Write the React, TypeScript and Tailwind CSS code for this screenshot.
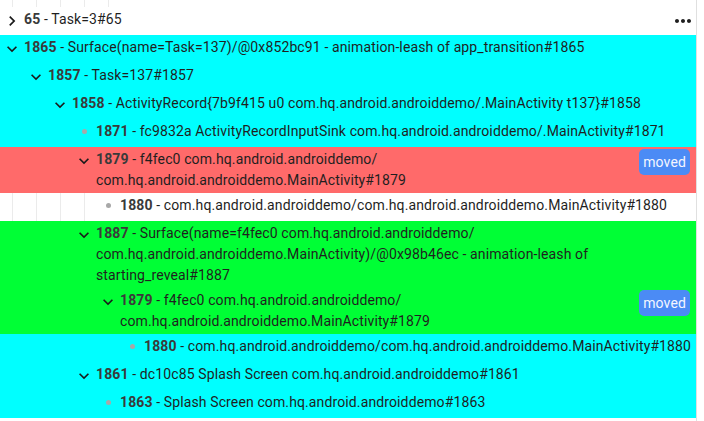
import React from "react";

type Row = {
  level: number;
  kind: "open" | "closed" | "leaf";
  id: string;
  text: string;
  bg: string;
  guides?: boolean;
  badge?: boolean;
  more?: boolean;
};

const rows: Row[] = [
  { level: 0, kind: "closed", id: "65", text: "Task=3#65", bg: "bg-white", more: true },
  { level: 0, kind: "open", id: "1865", text: "Surface(name=Task=137)/@0x852bc91 - animation-leash of app_transition#1865", bg: "bg-[#00ffff]" },
  { level: 1, kind: "open", id: "1857", text: "Task=137#1857", bg: "bg-[#00ffff]" },
  { level: 2, kind: "open", id: "1858", text: "ActivityRecord{7b9f415 u0 com.hq.android.androiddemo/.MainActivity t137}#1858", bg: "bg-[#00ffff]" },
  { level: 3, kind: "leaf", id: "1871", text: "fc9832a ActivityRecordInputSink com.hq.android.androiddemo/.MainActivity#1871", bg: "bg-[#00ffff]" },
  { level: 3, kind: "open", id: "1879", text: "f4fec0 com.hq.android.androiddemo/com.hq.android.androiddemo.MainActivity#1879", bg: "bg-[#ff6a6a]", badge: true },
  { level: 4, kind: "leaf", id: "1880", text: "com.hq.android.androiddemo/com.hq.android.androiddemo.MainActivity#1880", bg: "bg-white", guides: true },
  { level: 3, kind: "open", id: "1887", text: "Surface(name=f4fec0 com.hq.android.androiddemo/com.hq.android.androiddemo.MainActivity)/@0x98b46ec - animation-leash of starting_reveal#1887", bg: "bg-[#00ff35]" },
  { level: 4, kind: "open", id: "1879", text: "f4fec0 com.hq.android.androiddemo/com.hq.android.androiddemo.MainActivity#1879", bg: "bg-[#00ff35]", badge: true },
  { level: 5, kind: "leaf", id: "1880", text: "com.hq.android.androiddemo/com.hq.android.androiddemo.MainActivity#1880", bg: "bg-[#00ffff]" },
  { level: 3, kind: "open", id: "1861", text: "dc10c85 Splash Screen com.hq.android.androiddemo#1861", bg: "bg-[#00ffff]" },
  { level: 4, kind: "leaf", id: "1863", text: "Splash Screen com.hq.android.androiddemo#1863", bg: "bg-[#00ffff]" },
];

function ExpandMore() {
  return (
    <svg width="20" height="20" viewBox="0 0 24 24" fill="#1a1a1a">
      <path d="M16.59 8.59L12 13.17 7.41 8.59 6 10l6 6 6-6z" />
    </svg>
  );
}

function ChevronRight() {
  return (
    <svg width="20" height="20" viewBox="0 0 24 24" fill="#1a1a1a">
      <path d="M10 6L8.59 7.41 13.17 12l-4.58 4.59L10 18l6-6z" />
    </svg>
  );
}

function MoreHoriz() {
  return (
    <svg width="24" height="24" viewBox="0 0 24 24" fill="#1f1f1f">
      <path d="M6 10c-1.1 0-2 .9-2 2s.9 2 2 2 2-.9 2-2-.9-2-2-2zm12 0c-1.1 0-2 .9-2 2s.9 2 2 2 2-.9 2-2-.9-2-2-2zm-6 0c-1.1 0-2 .9-2 2s.9 2 2 2 2-.9 2-2-.9-2-2-2z" />
    </svg>
  );
}

function Guide({ line }: { line: boolean }) {
  return (
    <div className="w-[24px] shrink-0 self-stretch flex justify-center">
      {line ? <div className="w-px bg-[#ebebeb]" /> : null}
    </div>
  );
}

function WithSlashBreaks({ text }: { text: string }) {
  const parts = text.split("/");
  return (
    <>
      {parts.map((p, i) => (
        <React.Fragment key={i}>
          {p}
          {i < parts.length - 1 ? (
            <>
              /<wbr />
            </>
          ) : null}
        </React.Fragment>
      ))}
    </>
  );
}

function TreeRow({ row }: { row: Row }) {
  const spacers = Array.from({ length: row.level }, (_, i) => i);
  return (
    <div className={`flex items-start ${row.bg}`}>
      {spacers.map((i) => (
        <Guide key={i} line={!!row.guides} />
      ))}
      <div className="w-[24px] h-[24px] my-[2px] shrink-0 flex items-center justify-center">
        {row.kind === "open" ? <ExpandMore /> : null}
        {row.kind === "closed" ? <ChevronRight /> : null}
        {row.kind === "leaf" ? <div className="w-[5px] h-[5px] rounded-full bg-[#a8a8a8] -mt-[3px]" /> : null}
      </div>
      <div className="flex-1 min-w-0 my-[2px] text-[14px] leading-[21px] tracking-[0.12px] text-[#1f1f1f]">
        <span className="font-bold text-[#3a3a3a]">{row.id}</span>
        <span>
          {" - "}
          <WithSlashBreaks text={row.text} />
        </span>
      </div>
      {row.badge ? (
        <div className="mt-[2px] mr-[6px] h-[26px] px-[4px] shrink-0 flex items-center rounded-[5px] bg-[#4b8bf5] text-[14px] tracking-[0.12px] text-[#f4f6ff]">
          moved
        </div>
      ) : null}
      {row.more ? (
        <div className="my-[2px] mr-[1px] w-[24px] h-[24px] shrink-0 flex items-center justify-center">
          <MoreHoriz />
        </div>
      ) : null}
    </div>
  );
}

export default function App() {
  return (
    <div
      className="w-[704px] h-[421px] overflow-hidden bg-white flex"
      style={{ fontFamily: "Roboto, 'Noto Sans', sans-serif" }}
    >
      <div className="w-[697px] shrink-0 border-r border-[#e0e0e0] flex flex-col">
        <div className="h-[7px] flex">
          {[0, 1, 2, 3, 4].map((i) => (
            <Guide key={i} line={true} />
          ))}
        </div>
        {rows.map((r, i) => (
          <TreeRow key={i} row={r} />
        ))}
      </div>
      <div className="flex-1" />
    </div>
  );
}
